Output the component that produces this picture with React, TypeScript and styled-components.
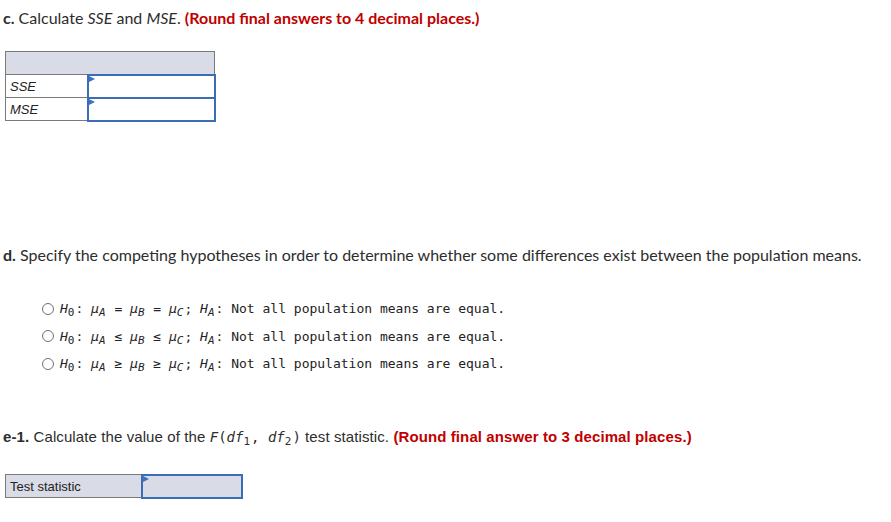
import React from 'react';
import styled, {createGlobalStyle} from 'styled-components';

const Global = createGlobalStyle`
  body {
    margin: 0;
    background: #fff;
    color: #2d2d2d;
    font-family: Lato, 'Open Sans', sans-serif;
  }
`;

const Page = styled.div`
  padding: 8px 3px 0;
  width: 891px;
  height: 522px;
  box-sizing: border-box;
  overflow: hidden;
`;

const Heading = styled.div<{$narrow?: boolean}>`
  font-size: 16px;
  line-height: 20px;
  white-space: nowrap;
  ${p => p.$narrow && `
    font-family: 'Liberation Sans', sans-serif;
    font-size: 15px;
    letter-spacing: 0.1px;
  `}
  b.num {
    font-weight: 700;
  }
  i {
    font-style: italic;
  }
`;

const Warn = styled.b`
  color: #c00000;
  font-weight: 700;
`;

const Grid = styled.table<{$top: number}>`
  border-collapse: collapse;
  margin: ${p => p.$top}px 0 0 2px;
  font-family: 'Liberation Sans', Arial, sans-serif;
  font-size: 13px;
  color: #222;
  td {
    border: 1px solid #7a7a7a;
    height: 23px;
    box-sizing: border-box;
    padding: 0 4px;
  }
`;

const HeadCell = styled.td`
  background: #d9dce6;
`;

const Label = styled.td<{$shade?: boolean; $w: number}>`
  width: ${p => p.$w}px;
  background: ${p => (p.$shade ? '#d9dce6' : '#fff')};
  font-style: ${p => (p.$shade ? 'normal' : 'italic')};
`;

const InputCell = styled.td<{$shade?: boolean; $w: number}>`
  &&& {
    width: ${p => p.$w}px;
    padding: 0;
    position: relative;
    border: 2px solid #3a6db3;
    background: ${p => (p.$shade ? '#d9dce6' : '#fff')};
  }
  &::before {
    content: '';
    position: absolute;
    left: 0;
    top: 0;
    border-left: 6px solid #3a72c4;
    border-top: 3px solid transparent;
    border-bottom: 3px solid transparent;
  }
`;

const Options = styled.div`
  margin: 34px 0 0 39px;
  display: flex;
  flex-direction: column;
  gap: 7.5px;
`;

const Option = styled.label`
  display: flex;
  align-items: center;
  gap: 6px;
  height: 20px;
  color: #222;
  white-space: pre;
`;

const Radio = styled.span`
  width: 12px;
  height: 12px;
  border-radius: 50%;
  border: 1px solid #707070;
  box-sizing: border-box;
  background: #fff;
  flex: none;
`;

const Mono = styled.span<{$size?: number}>`
  font-family: 'DejaVu Sans Mono', monospace;
  font-size: ${p => p.$size ?? 13}px;
  letter-spacing: 0;
  i {
    font-style: italic;
  }
  sub {
    font-size: 11px;
    vertical-align: -3px;
    line-height: 0;
    padding-right: 1px;
  }
`;

const Gap = styled.div<{$h: number}>`
  height: ${p => p.$h}px;
`;

const Mu = ({s}: {s: string}) => (
  <>
    <i>μ</i>
    <sub><i>{s}</i></sub>
  </>
);

const rels = ['=', '≤', '≥'];

export default function App() {
  return (
    <Page>
      <Global/>
      <Heading>
        <b className="num">c.</b> Calculate <i>SSE</i> and <i>MSE</i>.{' '}
        <Warn>(Round final answers to 4 decimal places.)</Warn>
      </Heading>
      <Grid $top={23}>
        <tbody>
          <tr>
            <HeadCell colSpan={2}/>
          </tr>
          <tr>
            <Label $w={82}>SSE</Label>
            <InputCell $w={127}/>
          </tr>
          <tr>
            <Label $w={82}>MSE</Label>
            <InputCell $w={127}/>
          </tr>
        </tbody>
      </Grid>
      <Gap $h={123}/>
      <Heading>
        <b className="num">d.</b> Specify the competing hypotheses in order to determine whether some
        differences exist between the population means.
      </Heading>
      <Options>
        {rels.map(r => (
          <Option key={r}>
            <Radio/>
            <Mono>
              <i>H</i><sub>0</sub>: <Mu s="A"/> {r} <Mu s="B"/> {r} <Mu s="C"/>; <i>H</i>
              <sub><i>A</i></sub>: Not all population means are equal.
            </Mono>
          </Option>
        ))}
      </Options>
      <Gap $h={53}/>
      <Heading $narrow>
        <b className="num">e-1.</b> Calculate the value of the{' '}
        <Mono $size={14}><i>F</i>(<i>df</i><sub>1</sub>, <i>df</i><sub>2</sub>)</Mono> test statistic.{' '}
        <Warn>(Round final answer to 3 decimal places.)</Warn>
      </Heading>
      <Grid $top={27}>
        <tbody>
          <tr>
            <Label $w={136} $shade>Test statistic</Label>
            <InputCell $w={100} $shade/>
          </tr>
        </tbody>
      </Grid>
    </Page>
  );
}
